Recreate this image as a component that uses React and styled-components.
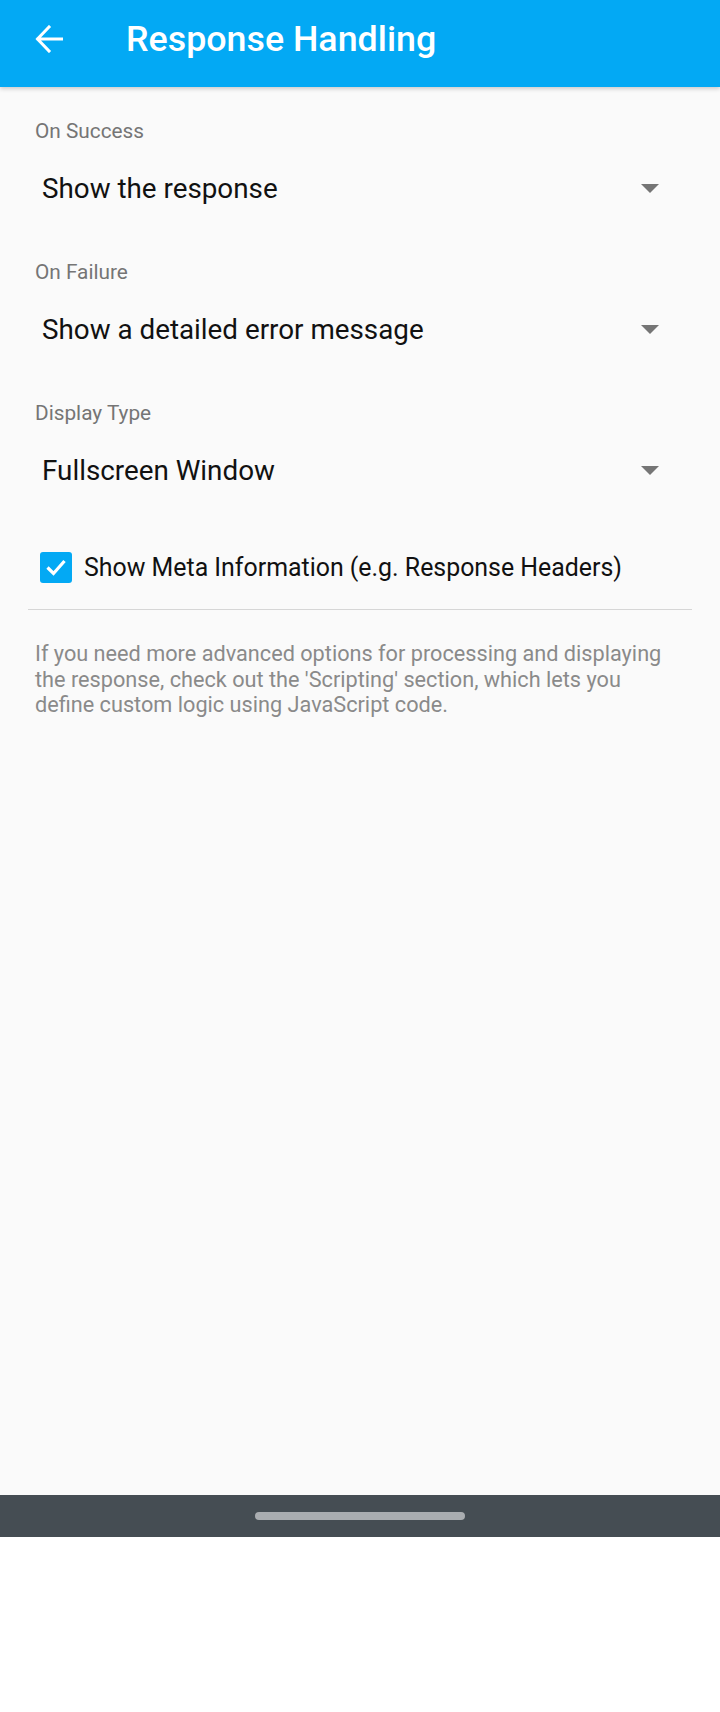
import React from "react";
import styled, { createGlobalStyle } from "styled-components";

const GlobalStyle = createGlobalStyle`
  html, body {
    margin: 0;
    padding: 0;
    background: #ffffff;
  }
  body {
    font-family: Roboto, "Noto Sans", sans-serif;
  }
`;

const fields = [
  { id: 1, label: "On Success", value: "Show the response" },
  { id: 2, label: "On Failure", value: "Show a detailed error message" },
  { id: 3, label: "Display Type", value: "Fullscreen Window" },
];

const App = () => {
  return (
    <Screen>
      <GlobalStyle />
      <AppBar>
        <BackButton aria-label="Back">
          <svg width="28" height="28" viewBox="0 0 28 28" fill="none">
            <path
              d="M27 14H3M14 2L2.5 14L14 26"
              stroke="#fff"
              strokeWidth="3"
              strokeLinecap="square"
            />
          </svg>
        </BackButton>
        <Title>Response Handling</Title>
      </AppBar>

      <Content>
        {fields.map((f) => (
          <Field key={f.id}>
            <Label>{f.label}</Label>
            <Spinner>
              <span>{f.value}</span>
              <Caret />
            </Spinner>
          </Field>
        ))}

        <CheckRow>
          <CheckBox>
            <svg width="22" height="18" viewBox="0 0 22 18" fill="none">
              <path
                d="M2.5 9.5L8.5 15.5L19.5 3"
                stroke="#fff"
                strokeWidth="3.2"
              />
            </svg>
          </CheckBox>
          <CheckText>Show Meta Information (e.g. Response Headers)</CheckText>
        </CheckRow>

        <Divider />

        <Help>
          If you need more advanced options for processing and displaying the
          response, check out the 'Scripting' section, which lets you define
          custom logic using JavaScript code.
        </Help>
      </Content>

      <NavBar>
        <Handle />
      </NavBar>
    </Screen>
  );
};

const Screen = styled.div`
  width: 720px;
  height: 1712px;
  display: flex;
  flex-direction: column;
  background: #ffffff;
`;

const AppBar = styled.header`
  height: 87px;
  box-sizing: border-box;
  padding-bottom: 9px;
  flex-shrink: 0;
  background: #03a9f4;
  display: flex;
  align-items: center;
  box-shadow: 0 2px 4px rgba(0, 0, 0, 0.18);
  position: relative;
  z-index: 1;
`;

const BackButton = styled.div`
  width: 28px;
  height: 28px;
  margin-left: 35px;
  display: flex;
`;

const Title = styled.h1`
  margin: 0 0 0 63px;
  font-family: Roboto, sans-serif;
  font-weight: 500;
  font-size: 35.8px;
  color: #ffffff;
`;

const Content = styled.main`
  flex: 1;
  background: #fafafa;
  padding: 32px 28px 0;
`;

const Field = styled.div`
  margin-bottom: 27px;
`;

const Label = styled.div`
  padding-left: 7px;
  height: 24px;
  line-height: 24px;
  font-size: 20.8px;
  color: #757575;
`;

const Spinner = styled.div`
  height: 90px;
  display: flex;
  align-items: center;
  justify-content: space-between;
  padding: 0 33px 0 14px;
  font-size: 27.8px;
  color: #111111;
`;

const Caret = styled.div`
  width: 0;
  height: 0;
  border-left: 9px solid transparent;
  border-right: 9px solid transparent;
  border-top: 9px solid #757575;
`;

const CheckRow = styled.div`
  height: 72px;
  margin-top: -11px;
  display: flex;
  align-items: center;
  padding-left: 12px;
`;

const CheckBox = styled.div`
  width: 32px;
  height: 31px;
  border-radius: 3px;
  background: #03a9f4;
  display: flex;
  align-items: center;
  justify-content: center;
  flex-shrink: 0;
`;

const CheckText = styled.span`
  margin-left: 12px;
  font-size: 24.9px;
  color: #111111;
`;

const Divider = styled.hr`
  margin: 6px 0 0;
  border: none;
  height: 1px;
  background: #d6d6d6;
`;

const Help = styled.p`
  margin: 31px 0 0;
  padding: 0 22px 0 7px;
  font-size: 21.7px;
  line-height: 25.5px;
  color: #8a8a8a;
`;

const NavBar = styled.div`
  height: 42px;
  flex-shrink: 0;
  background: #454d53;
  display: flex;
  align-items: center;
  justify-content: center;
  margin-bottom: 175px;
`;

const Handle = styled.div`
  width: 210px;
  height: 8px;
  border-radius: 4px;
  background: #a9adb0;
`;

export default App;
